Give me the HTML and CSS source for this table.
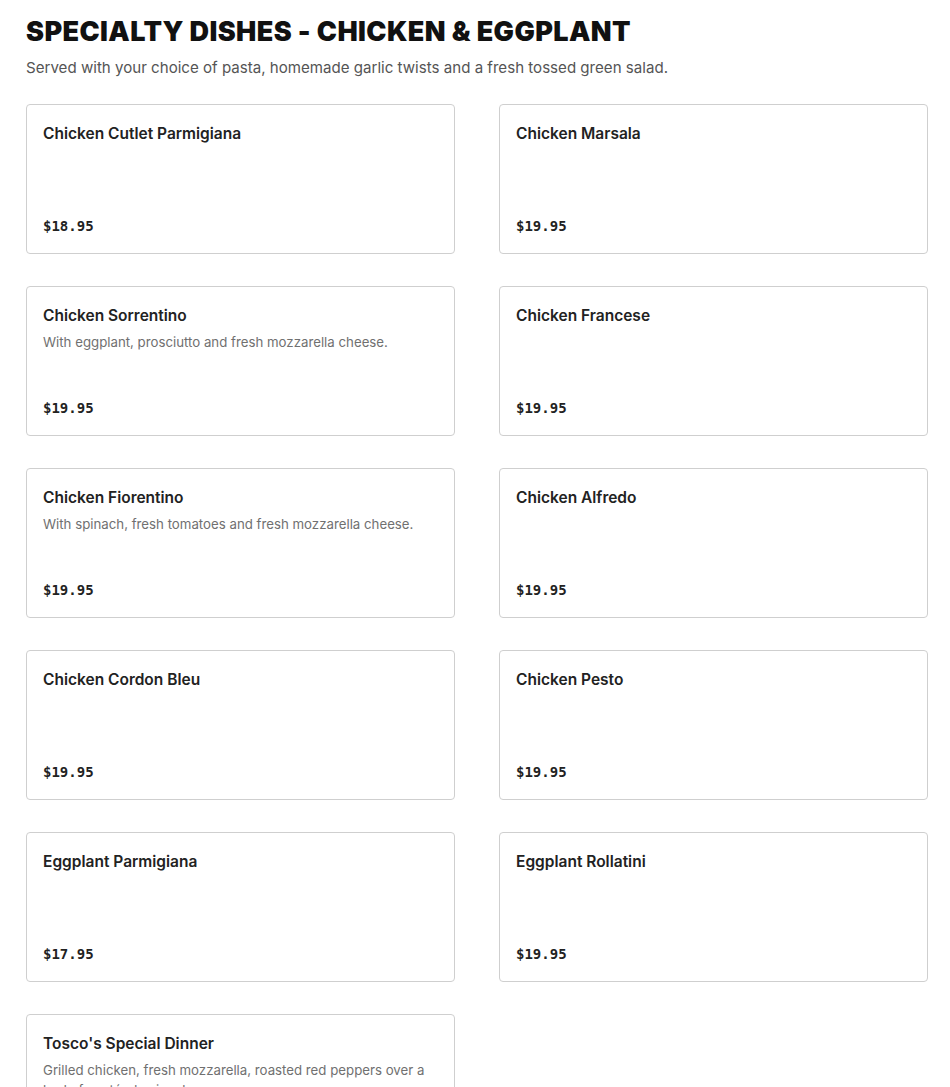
FILE: index.html
```html
<!DOCTYPE html>
<html lang="en">
<head>
    <meta charset="UTF-8">
    <meta name="viewport" content="width=device-width, initial-scale=1.0">
    <title>Specialty Dishes - Chicken &amp; Eggplant</title>
    <link rel="stylesheet" href="styles.css">
</head>
<body>
    <section class="menu-section">
        <h1 class="section-title">SPECIALTY DISHES - CHICKEN &amp; EGGPLANT</h1>
        <p class="section-note">Served with your choice of pasta, homemade garlic twists and a fresh tossed green salad.</p>

        <div class="items">
            <div class="item">
                <div class="item-top">
                    <div class="item-name">Chicken Cutlet Parmigiana</div>
                </div>
                <div class="item-price">$18.95</div>
            </div>
            <div class="item">
                <div class="item-top">
                    <div class="item-name">Chicken Marsala</div>
                </div>
                <div class="item-price">$19.95</div>
            </div>
            <div class="item">
                <div class="item-top">
                    <div class="item-name">Chicken Sorrentino</div>
                    <div class="item-desc">With eggplant, prosciutto and fresh mozzarella cheese.</div>
                </div>
                <div class="item-price">$19.95</div>
            </div>
            <div class="item">
                <div class="item-top">
                    <div class="item-name">Chicken Francese</div>
                </div>
                <div class="item-price">$19.95</div>
            </div>
            <div class="item">
                <div class="item-top">
                    <div class="item-name">Chicken Fiorentino</div>
                    <div class="item-desc">With spinach, fresh tomatoes and fresh mozzarella cheese.</div>
                </div>
                <div class="item-price">$19.95</div>
            </div>
            <div class="item">
                <div class="item-top">
                    <div class="item-name">Chicken Alfredo</div>
                </div>
                <div class="item-price">$19.95</div>
            </div>
            <div class="item">
                <div class="item-top">
                    <div class="item-name">Chicken Cordon Bleu</div>
                </div>
                <div class="item-price">$19.95</div>
            </div>
            <div class="item">
                <div class="item-top">
                    <div class="item-name">Chicken Pesto</div>
                </div>
                <div class="item-price">$19.95</div>
            </div>
            <div class="item">
                <div class="item-top">
                    <div class="item-name">Eggplant Parmigiana</div>
                </div>
                <div class="item-price">$17.95</div>
            </div>
            <div class="item">
                <div class="item-top">
                    <div class="item-name">Eggplant Rollatini</div>
                </div>
                <div class="item-price">$19.95</div>
            </div>
            <div class="item">
                <div class="item-top">
                    <div class="item-name">Tosco's Special Dinner</div>
                    <div class="item-desc">Grilled chicken, fresh mozzarella, roasted red peppers over a bed of sautéed spinach.</div>
                </div>
                <div class="item-price">$21.95</div>
            </div>
        </div>
    </section>
</body>
</html>
```

FILE: styles.css
```css
body {
    margin: 0;
    background-color: #fff;
    font-family: Inter, "Liberation Sans", sans-serif;
    color: #222;
}

.menu-section {
    padding: 16px 22px 40px 26px;
}

.section-title {
    margin: 0;
    font-family: Inter, sans-serif;
    font-size: 27px;
    font-weight: 900;
    letter-spacing: 0.4px;
    line-height: 32px;
    color: #111;
}

.section-note {
    margin: 8px 0 0;
    font-size: 15.1px;
    line-height: 24px;
    color: #555;
}

.items {
    display: grid;
    grid-template-columns: 1fr 1fr;
    column-gap: 44px;
    row-gap: 32px;
    margin-top: 24px;
}

.item {
    display: flex;
    flex-direction: column;
    justify-content: space-between;
    height: 150px;
    box-sizing: border-box;
    padding: 17px 16px 17px 16px;
    border: 1px solid #cfcfcf;
    border-radius: 4px;
    background: #fff;
}

.item-name {
    font-size: 15.5px;
    font-weight: 600;
    line-height: 24px;
    color: #222;
}

.item-desc {
    margin-top: 4px;
    font-size: 13.25px;
    line-height: 20px;
    color: #707070;
}

.item-price {
    font-family: "DejaVu Sans Mono", "Liberation Mono", monospace;
    font-size: 14px;
    font-weight: bold;
    line-height: 20px;
    color: #222;
}
```
